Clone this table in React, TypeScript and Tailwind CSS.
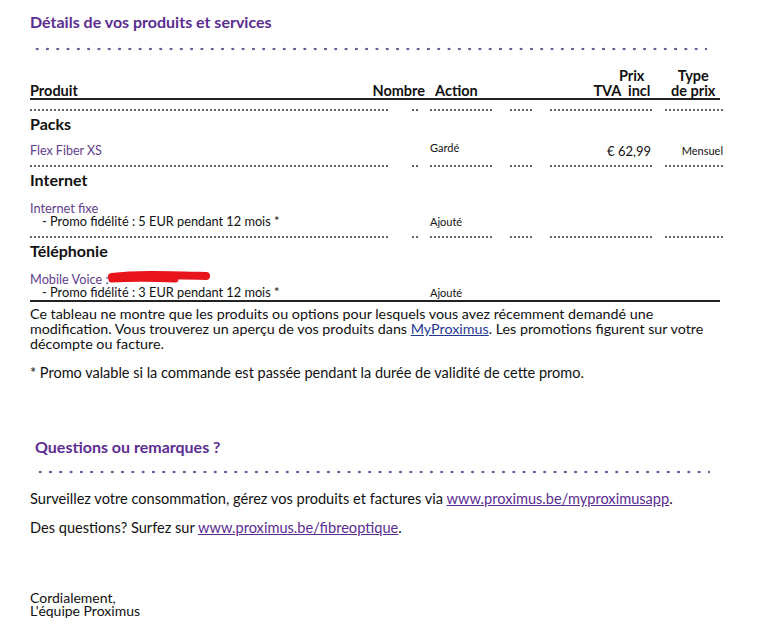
import React from 'react';

const font = { fontFamily: 'Lato, "Noto Sans", sans-serif' };

const Dots = ({ w, ml = 0 }: { w: number; ml?: number }) => (
  <div className="flex shrink-0 gap-[2px] h-[2px]" style={{ width: w, marginLeft: ml }}>
    {Array.from({ length: Math.floor((w + 2) / 4) }).map((_, i) => (
      <span key={i} className="block w-[2px] h-[2px] shrink-0 bg-[#666]" />
    ))}
  </div>
);

const DotRow = () => (
  <div className="h-[8px] flex items-center">
    <Dots w={360} />
    <Dots w={9} ml={22} />
    <Dots w={62} ml={9} />
    <Dots w={24} ml={18} />
    <Dots w={103} ml={16} />
    <Dots w={58} ml={12} />
  </div>
);

const PurpleDots = ({ w }: { w: number }) => (
  <div
    className="h-[4px] bg-[radial-gradient(circle,#6d5a96_1.1px,transparent_1.6px)] bg-[length:10.3px_4px] bg-repeat-x"
    style={{ width: w }}
  />
);

const Heading = ({ children }: { children: React.ReactNode }) => (
  <div className="h-[20px] leading-[20px] text-[16px] font-bold text-[#111]">{children}</div>
);

const Redaction = () => (
  <svg width="106" height="16" viewBox="0 0 106 16" className="inline-block align-middle -ml-[3px] -mt-[8px]">
    <path d="M6 8 C 30 5, 60 6, 100 7" stroke="#e8141c" strokeWidth="8" strokeLinecap="round" fill="none" />
    <path d="M5 11 C 25 10, 45 10, 70 11" stroke="#e8141c" strokeWidth="5" strokeLinecap="round" fill="none" />
  </svg>
);

export default function App() {
  return (
    <div className="w-[759px] h-[629px] bg-white text-[#111] overflow-hidden" style={font}>
      <div className="pl-[30px] pt-[12px]">
        <div className="h-[20px] leading-[20px] text-[16px] font-bold text-[#5c2d91]">
          Détails de vos produits et services
        </div>
        <div className="mt-[15px] ml-[2px]">
          <PurpleDots w={675} />
        </div>

        {/* table header */}
        <div className="mt-[18px] w-[690px] h-[29px] flex items-end text-[14.5px] font-bold leading-[15px] border-b-2 border-[#222] box-content">
          <div className="w-[398px] flex justify-between">
            <span>Produit</span>
            <span>Nombre</span>
          </div>
          <div className="ml-[10px] w-[116px]">Action</div>
          <div className="w-[101px] text-right">
            <div className="mr-[6px]">Prix</div>
            <div>TVA&nbsp;&nbsp;incl</div>
          </div>
          <div className="ml-[16px] w-[54px] text-center">
            <div>Type</div>
            <div>de prix</div>
          </div>
        </div>

        <div className="mt-[6px]">
          <DotRow />
          <Heading>Packs</Heading>
          <div className="pt-[9px] pb-[3px] flex text-[12.5px] leading-[16px]">
            <div className="w-[400px] text-[#5f3d8c]">Flex Fiber XS</div>
            <div className="w-[120px] text-[11px] -mt-[3px]">Gardé</div>
            <div className="w-[101px] text-right text-[13px]">€ 62,99</div>
            <div className="w-[72px] text-right text-[11px]">Mensuel</div>
          </div>

          <DotRow />
          <Heading>Internet</Heading>
          <div className="pt-[11px] pb-[5px] text-[12.75px]">
            <div className="leading-[14px] text-[#5f3d8c]">Internet fixe</div>
            <div className="flex leading-[13px]">
              <div className="w-[400px] pl-[12px]">- Promo fidélité : 5 EUR pendant 12 mois *</div>
              <div className="text-[11px]">Ajouté</div>
            </div>
          </div>

          <DotRow />
          <Heading>Téléphonie</Heading>
          <div className="pt-[11px] pb-[1px] text-[12.75px]">
            <div className="leading-[14px] text-[#5f3d8c] whitespace-nowrap">
              Mobile Voice :<Redaction />
            </div>
            <div className="flex leading-[13px]">
              <div className="w-[400px] pl-[12px]">- Promo fidélité : 3 EUR pendant 12 mois *</div>
              <div className="text-[11px]">Ajouté</div>
            </div>
          </div>
          <div className="w-[690px] h-[2px] bg-[#222]" />
        </div>

        <p className="mt-[4px] w-[720px] text-[14.3px] leading-[15px]">
          Ce tableau ne montre que les produits ou options pour lesquels vous avez récemment demandé une
          <br />
          modification. Vous trouverez un aperçu de vos produits dans{' '}
          <a className="text-[#1f3a93] underline">MyProximus</a>. Les promotions figurent sur votre
          <br />
          décompte ou facture.
        </p>
        <p className="mt-[14px] text-[14.5px] leading-[15px]">
          * Promo valable si la commande est passée pendant la durée de validité de cette promo.
        </p>

        <div className="ml-[5px] mt-[57px]">
          <div className="h-[20px] leading-[20px] text-[16px] font-bold text-[#5c2d91]">
            Questions ou remarques ?
          </div>
          <div className="mt-[13px]">
            <PurpleDots w={675} />
          </div>
        </div>

        <p className="mt-[17px] text-[14.6px] leading-[16px]">
          Surveillez votre consommation, gérez vos produits et factures via{' '}
          <a className="text-[#5c2d91] underline">www.proximus.be/myproximusapp</a>.
        </p>
        <p className="mt-[13px] text-[14.6px] leading-[16px]">
          Des questions? Surfez sur <a className="text-[#5c2d91] underline">www.proximus.be/fibreoptique</a>.
        </p>

        <div className="mt-[55px] text-[14px] leading-[13px]">
          <div>Cordialement,</div>
          <div>L'équipe Proximus</div>
        </div>
      </div>
    </div>
  );
}
